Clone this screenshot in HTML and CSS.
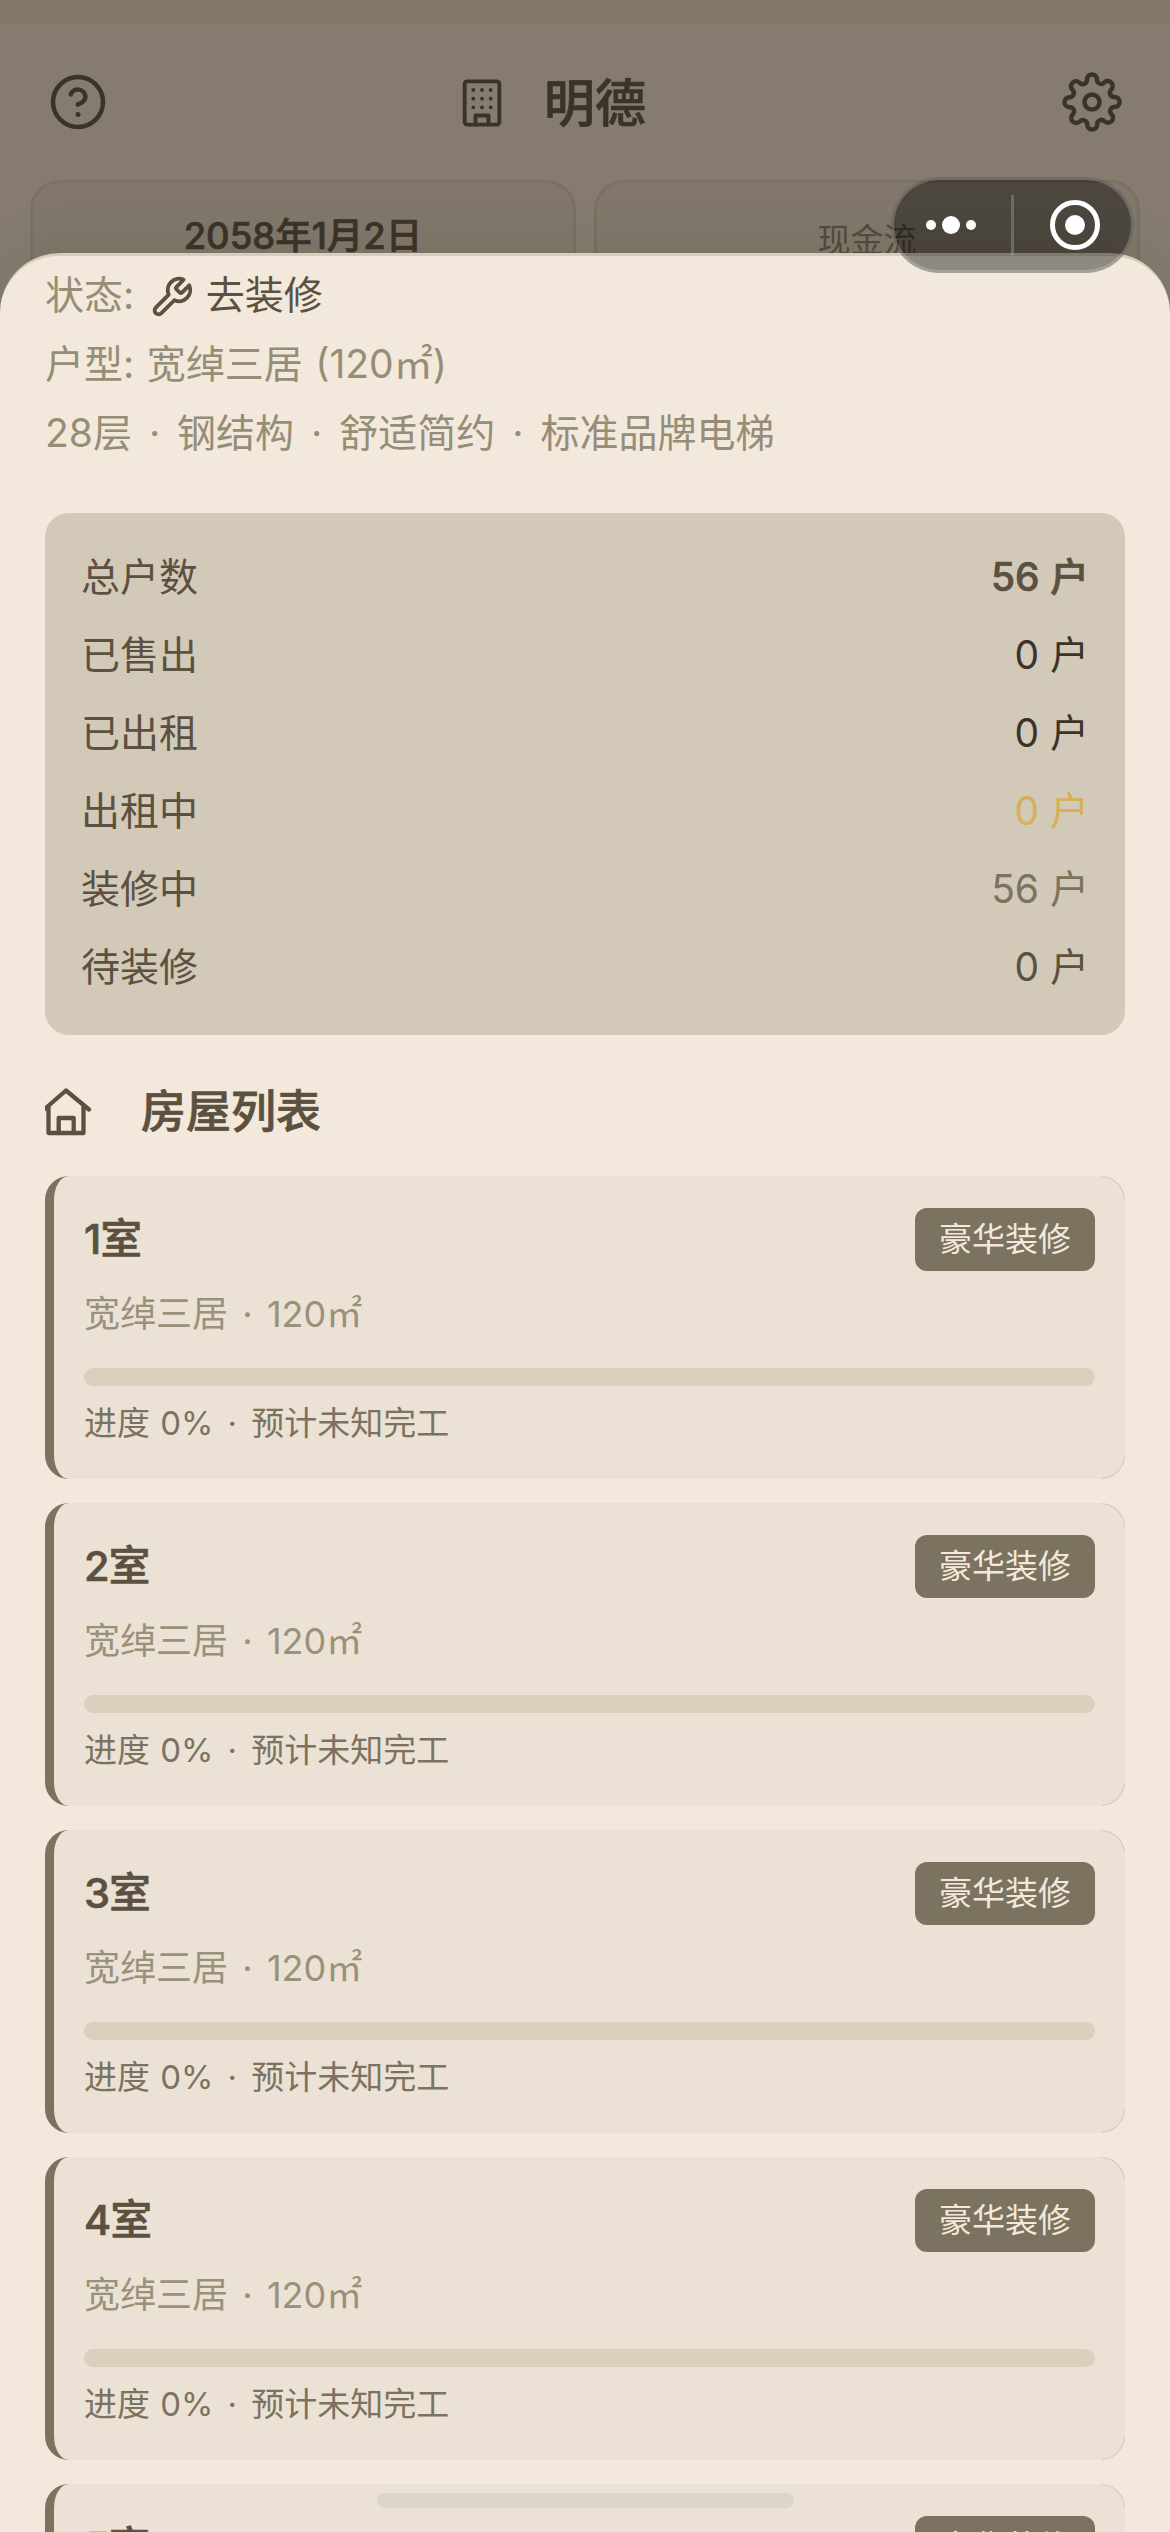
FILE: index.html
```html
<!DOCTYPE html>
<html lang="zh-CN">
<head>
<meta charset="utf-8">
<title>明德</title>
<link rel="stylesheet" href="styles.css">
</head>
<body>
<div class="screen">
  <div class="backdrop-page">
    <header class="topbar">
      <svg class="icon icon-lg" viewBox="0 0 24 24"><circle cx="12" cy="12" r="10"/><path d="M9.09 9a3 3 0 0 1 5.83 1c0 2-3 3-3 3"/><path class="dot" d="M12 17h.01"/></svg>
      <h1 class="brand">
        <svg class="icon icon-building" viewBox="0 0 24 24"><rect x="4" y="2" width="16" height="20" rx="1.2"/><path d="M9 22v-4.2h6V22"/><path d="M8 6h.01M12 6h.01M16 6h.01M8 10h.01M12 10h.01M16 10h.01M8 14h.01M12 14h.01M16 14h.01"/></svg>
        <span>明德</span>
      </h1>
      <svg class="icon icon-lg" viewBox="0 0 24 24"><circle cx="12" cy="12" r="3"/><path d="M19.4 15a1.65 1.65 0 0 0 .33 1.82l.06.06a2 2 0 1 1-2.83 2.83l-.06-.06a1.65 1.65 0 0 0-1.82-.33 1.65 1.65 0 0 0-1 1.51V21a2 2 0 0 1-4 0v-.09A1.65 1.65 0 0 0 9 19.4a1.65 1.65 0 0 0-1.82.33l-.06.06a2 2 0 1 1-2.83-2.83l.06-.06a1.65 1.65 0 0 0 .33-1.82 1.65 1.65 0 0 0-1.51-1H3a2 2 0 0 1 0-4h.09A1.65 1.65 0 0 0 4.6 9a1.65 1.65 0 0 0-.33-1.82l-.06-.06a2 2 0 1 1 2.83-2.83l.06.06a1.65 1.65 0 0 0 1.82.33H9a1.65 1.65 0 0 0 1-1.51V3a2 2 0 0 1 4 0v.09a1.65 1.65 0 0 0 1 1.51 1.65 1.65 0 0 0 1.82-.33l.06-.06a2 2 0 1 1 2.83 2.83l-.06.06a1.65 1.65 0 0 0-.33 1.82V9a1.65 1.65 0 0 0 1.51 1H21a2 2 0 0 1 0 4h-.09a1.65 1.65 0 0 0-1.51 1z"/></svg>
    </header>
    <div class="summary">
      <div class="summary-card date">2058年1月2日</div>
      <div class="summary-card flow">现金流</div>
    </div>
  </div>

  <main class="sheet">
    <div class="info">
      <p class="info-line">状态: <svg class="icon icon-wrench" viewBox="0 0 24 24"><path d="M14.7 6.3a1 1 0 0 0 0 1.4l1.6 1.6a1 1 0 0 0 1.4 0l3.77-3.77a6 6 0 0 1-7.94 7.94l-6.91 6.91a2.12 2.12 0 0 1-3-3l6.91-6.91a6 6 0 0 1 7.94-7.94l-3.76 3.76z"/></svg><span class="status">去装修</span></p>
      <p class="info-line">户型: 宽绰三居 (120㎡)</p>
      <p class="info-line">28层<span class="sep"> · </span>钢结构<span class="sep"> · </span>舒适简约<span class="sep"> · </span>标准品牌电梯</p>
    </div>

    <dl class="stats">
      <div class="stat"><dt>总户数</dt><dd class="total">56 户</dd></div>
      <div class="stat"><dt>已售出</dt><dd class="dark">0 户</dd></div>
      <div class="stat"><dt>已出租</dt><dd class="dark">0 户</dd></div>
      <div class="stat"><dt>出租中</dt><dd class="gold">0 户</dd></div>
      <div class="stat"><dt>装修中</dt><dd class="muted">56 户</dd></div>
      <div class="stat"><dt>待装修</dt><dd>0 户</dd></div>
    </dl>

    <h2 class="section-title">
      <svg class="icon icon-home" viewBox="0 0 48 48"><path d="M-2 22.5 21 2.5 44 21.5"/><path d="M3.5 18.5V45h35V18.5"/><path d="M13.7 45V30h15v15"/></svg>
      <span>房屋列表</span>
    </h2>

    <section class="rooms">
      <article class="room">
        <div class="room-head"><h3>1室</h3><span class="tag">豪华装修</span></div>
        <p class="room-type">宽绰三居<span class="sep"> · </span>120㎡</p>
        <div class="track"></div>
        <p class="progress">进度 0%<span class="sep"> · </span>预计未知完工</p>
      </article>
      <article class="room">
        <div class="room-head"><h3>2室</h3><span class="tag">豪华装修</span></div>
        <p class="room-type">宽绰三居<span class="sep"> · </span>120㎡</p>
        <div class="track"></div>
        <p class="progress">进度 0%<span class="sep"> · </span>预计未知完工</p>
      </article>
      <article class="room">
        <div class="room-head"><h3>3室</h3><span class="tag">豪华装修</span></div>
        <p class="room-type">宽绰三居<span class="sep"> · </span>120㎡</p>
        <div class="track"></div>
        <p class="progress">进度 0%<span class="sep"> · </span>预计未知完工</p>
      </article>
      <article class="room">
        <div class="room-head"><h3>4室</h3><span class="tag">豪华装修</span></div>
        <p class="room-type">宽绰三居<span class="sep"> · </span>120㎡</p>
        <div class="track"></div>
        <p class="progress">进度 0%<span class="sep"> · </span>预计未知完工</p>
      </article>
      <article class="room">
        <div class="room-head"><h3>5室</h3><span class="tag">豪华装修</span></div>
      </article>
    </section>
  </main>

  <div class="capsule">
    <svg class="capsule-more" viewBox="0 0 50 18"><circle cx="5" cy="9" r="5"/><circle cx="25" cy="9" r="9"/><circle cx="45" cy="9" r="5"/></svg>
    <span class="capsule-line"></span>
    <svg class="capsule-close" viewBox="0 0 50 50"><circle class="ring" cx="25" cy="25" r="22.5"/><circle cx="25" cy="25" r="10"/></svg>
  </div>
  <div class="home-indicator"></div>
</div>
</body>
</html>
```

FILE: styles.css
```css
* { box-sizing: border-box; margin: 0; padding: 0; }

body {
  width: 1170px;
  height: 2532px;
  overflow: hidden;
  font-family: Inter, "Noto Sans CJK SC", sans-serif;
  font-weight: 390;
  color: #5c5140;
}

.screen {
  position: relative;
  display: flex;
  flex-direction: column;
  width: 1170px;
  height: 2532px;
  overflow: hidden;
  background: #857c6f;
}

.icon {
  flex: none;
  fill: none;
  stroke: currentColor;
  stroke-width: 1.8;
  stroke-linecap: round;
  stroke-linejoin: round;
}
.icon-lg { width: 60px; height: 60px; }
.icon .dot { stroke-width: 2; }

/* medium weight thickened a little, between medium and bold */
.brand, .date, .total, .section-title, .room-head h3 {
  font-weight: 500;
  -webkit-text-stroke: 0.7px currentColor;
}

.sep { margin: 0 0.115em; }

/* dimmed page behind the sheet */
.backdrop-page {
  flex: none;
  height: 253px;
  border-top: 24px solid #817869;
  color: #3c3328;
}
.topbar {
  display: flex;
  align-items: center;
  justify-content: space-between;
  height: 156px;
  padding: 0 48px;
}
.brand {
  display: flex;
  align-items: center;
  gap: 36px;
  margin-right: 68px;
  padding-top: 1px;
  font-size: 51px;
  line-height: 60px;
}
.brand span { padding-top: 2px; }
.icon-building { width: 52px; height: 52px; }
.summary {
  display: grid;
  grid-template-columns: 1fr 1fr;
  gap: 18px;
  padding: 0 30px;
}
.summary-card {
  height: 180px;
  border: 3px solid #7a7162;
  border-radius: 30px;
  background: #81786b;
  text-align: center;
}
.date {
  padding-top: 25px;
  font-size: 36.5px;
  line-height: 56px;
}
.flow {
  padding-top: 32px;
  font-size: 33px;
  line-height: 50px;
  color: #544a3c;
}

/* sheet */
.sheet {
  position: relative;
  flex: 1;
  min-height: 0;
  padding: 4px 45px 0;
  border-top: 3px solid #d8cebc;
  border-radius: 60px 60px 0 0;
  background: #f2e9dc;
  box-shadow: 0 -12px 48px rgba(60, 50, 35, 0.1);
  overflow: hidden;
}
.info { height: 253px; }
.info-line {
  display: flex;
  align-items: center;
  height: 69px;
  font-size: 39px;
  line-height: 69px;
  word-spacing: 1.5px;
  color: #968d77;
  white-space: pre;
}
.icon-wrench {
  width: 45px;
  height: 45px;
  margin: 6px 12px 0 2px;
  stroke-width: 2.05;
  color: #5c5140;
}
.status { color: #5c5140; }

.stats {
  padding: 25px 36px 29px;
  border-radius: 24px;
  background: #d2c9b8;
}
.stat {
  display: flex;
  justify-content: space-between;
  height: 78px;
  font-size: 39px;
  line-height: 78px;
}
.stat dd { white-space: pre; }
.stat .dark { color: #3c3328; }
.stat .gold { color: #d6b057; }
.stat .muted { color: #7b7260; }

.section-title {
  display: flex;
  align-items: center;
  gap: 48px;
  height: 141px;
  padding-top: 13px;
  font-size: 45px;
  line-height: 66px;
}
.icon-home { width: 48px; height: 48px; stroke-width: 4.3; }

.rooms { display: flex; flex-direction: column; gap: 24px; }
.room {
  position: relative;
  flex: none;
  height: 303px;
  padding: 32px 30px 0;
  border-left: 9px solid #7b7260;
  border-radius: 24px;
  background: #ebe2d5;
}
/* hairline that follows the right-hand corners only */
.room::after {
  content: "";
  position: absolute;
  inset: 0 0 0 auto;
  width: 48px;
  border: 1px solid #cfc6b6;
  border-left: 0;
  border-radius: 0 24px 24px 0;
  -webkit-mask: linear-gradient(#000, #000) right top / 23px 23px no-repeat, linear-gradient(#000, #000) right bottom / 23px 23px no-repeat;
  mask: linear-gradient(#000, #000) right top / 23px 23px no-repeat, linear-gradient(#000, #000) right bottom / 23px 23px no-repeat;
}
.room-head {
  display: flex;
  align-items: center;
  justify-content: space-between;
  height: 63px;
}
.room-head h3 { font-size: 41.5px; line-height: 63px; letter-spacing: -0.8px; }
.tag {
  width: 180px;
  height: 63px;
  border-radius: 12px;
  background: #7b7260;
  color: #f2e9dc;
  font-size: 33px;
  line-height: 62px;
  text-align: center;
}
.room-type {
  margin-top: 16px;
  font-size: 36px;
  line-height: 54px;
  color: #9a917b;
  white-space: pre;
}
.track {
  height: 18px;
  margin-top: 27px;
  border-radius: 9px;
  background: #d9d0be;
}
.progress {
  margin-top: 12px;
  font-size: 33px;
  line-height: 50px;
  word-spacing: 1px;
  color: #7b7260;
  white-space: pre;
}

/* floating system controls */
.capsule {
  position: absolute;
  top: 177px;
  right: 36px;
  display: flex;
  align-items: center;
  width: 243px;
  height: 96px;
  padding-left: 32px;
  border: 3px solid rgba(255, 255, 255, 0.2);
  border-radius: 48px;
  background: rgba(0, 0, 0, 0.41);
}
.capsule svg { flex: none; fill: #fff; }
.capsule-more { width: 50px; height: 18px; }
.capsule-line { width: 3px; height: 60px; margin: 0 36px 0 35px; background: rgba(255, 255, 255, 0.2); }
.capsule-close { width: 50px; height: 50px; }
.capsule-close .ring { fill: none; stroke: #fff; stroke-width: 5; }

.home-indicator {
  position: absolute;
  left: 377px;
  bottom: 24px;
  width: 417px;
  height: 15px;
  border-radius: 7.5px;
  background: #dbd6c9;
}
```
